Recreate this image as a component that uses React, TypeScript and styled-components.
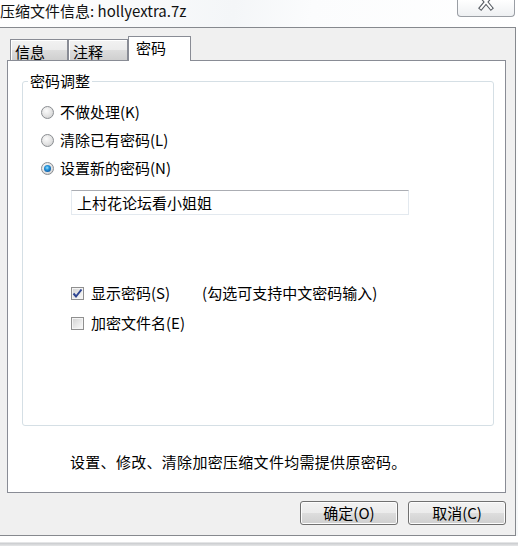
import React from 'react';
import styled, { createGlobalStyle } from 'styled-components';

const GlobalStyle = createGlobalStyle`
    html, body {
        margin: 0;
        padding: 0;
        background: #ffffff;
    }
    body {
        width: 518px;
        height: 546px;
        overflow: hidden;
        font-family: "Noto Sans CJK SC", "Liberation Sans", sans-serif;
        font-size: 15px;
        color: #000;
    }
`;

const Window = styled.div`
    width: 518px;
    height: 546px;
    display: flex;
    flex-direction: column;
    background: linear-gradient(180deg, #ffffff 0%, #f6f8f9 100%);
`;

const TitleBar = styled.div`
    height: 27px;
    display: flex;
    justify-content: space-between;
    align-items: flex-start;
    background: linear-gradient(100deg, #ffffff 0%, #f4f6f8 45%, #fbfcfd 60%, #ffffff 100%);
`;

const Title = styled.div`
    line-height: 21px;
    font-size: 15px;
    color: #111;
    white-space: nowrap;
`;

const CloseButton = styled.div`
    width: 56px;
    height: 16px;
    margin-right: 3px;
    border: 1px solid #9a9ea4;
    border-top: none;
    border-radius: 0 0 4px 4px;
    background: linear-gradient(180deg, #ffffff 0%, #eef0f2 100%);
    display: flex;
    justify-content: center;
    align-items: flex-start;
    overflow: hidden;
`;

const Client = styled.div`
    width: 516px;
    height: 509px;
    box-sizing: border-box;
    border-top: 1px solid #86898e;
    border-right: 1px solid #86898e;
    border-bottom: 1px solid #86898e;
    background: #f0f0f0;
    display: flex;
    flex-direction: column;
`;

const FrameBottom = styled.div`
    flex: 1;
    background: linear-gradient(180deg, #ffffff 0px, #ffffff 6px, #c9cbce 7px, #e6e7e8 10px);
`;

const TabRow = styled.div`
    display: flex;
    align-items: flex-end;
    height: 24px;
    margin-top: 8px;
    padding-left: 10px;
    position: relative;
    z-index: 1;
`;

const Tab = styled.div<{ $w: number; $active?: boolean }>`
    box-sizing: border-box;
    width: ${(p) => p.$w}px;
    height: ${(p) => (p.$active ? 25 : 21)}px;
    margin-bottom: ${(p) => (p.$active ? -1 : 0)}px;
    padding-left: ${(p) => (p.$active ? 7 : 4)}px;
    border: 1px solid #898c95;
    border-bottom: none;
    background: ${(p) =>
        p.$active ? '#ffffff' : 'linear-gradient(180deg, #f2f2f2 0%, #ebebeb 50%, #dddddd 51%, #cfcfcf 100%)'};
    box-shadow: ${(p) => (p.$active ? 'none' : 'inset 1px 1px 0 #ffffff')};
    line-height: ${(p) => (p.$active ? 22 : 24)}px;
    font-size: 15px;
`;

const Panel = styled.div`
    box-sizing: border-box;
    width: 499px;
    height: 433px;
    margin-left: 7px;
    border: 1px solid #898c95;
    background: #ffffff;
    display: flex;
    flex-direction: column;
`;

const GroupBox = styled.fieldset`
    margin: 12px 11px 0 14px;
    padding: 0 0 87px 0;
    border: 1px solid #d5dfe5;
    border-radius: 3px;
    display: flex;
    flex-direction: column;
`;

const GroupLabel = styled.legend`
    margin-left: 5px;
    padding: 0 2px;
    line-height: 16px;
    font-size: 15px;
`;

const RadioList = styled.div`
    margin-top: 9px;
    padding-left: 18px;
    display: flex;
    flex-direction: column;
`;

const OptionRow = styled.label<{ $h: number }>`
    display: flex;
    align-items: center;
    height: ${(p) => p.$h}px;
    gap: 6px;
    line-height: 18px;
    white-space: nowrap;
`;

const RadioDot = styled.span<{ $on?: boolean }>`
    box-sizing: border-box;
    width: 13px;
    height: 13px;
    border-radius: 50%;
    border: 1px solid #8a8d91;
    display: flex;
    align-items: center;
    justify-content: center;
    background: radial-gradient(circle at 40% 35%, #fbfbfb 0%, #e2e2e2 55%, #c6c7c9 100%);

    &::after {
        content: '';
        display: ${(p) => (p.$on ? 'block' : 'none')};
        width: 7px;
        height: 7px;
        border-radius: 50%;
        background: radial-gradient(circle at 45% 40%, #9be2fb 0%, #2a97dc 35%, #0d5ca6 75%, #0a3768 100%);
    }
`;

const PasswordInput = styled.div`
    box-sizing: border-box;
    margin: 8px 0 0 48px;
    width: 338px;
    height: 25px;
    border: 1px solid #e3e9ef;
    border-top-color: #abadb3;
    padding-left: 5px;
    line-height: 23px;
    font-size: 15px;
`;

const CheckList = styled.div`
    margin: 63px 0 0 48px;
    display: flex;
    flex-direction: column;
`;

const CheckBox = styled.span`
    box-sizing: border-box;
    width: 13px;
    height: 13px;
    border: 1px solid #8f8f8f;
    background: linear-gradient(135deg, #d0d0d0 0%, #e6e6e6 50%, #fbfbfb 100%);
    box-shadow: inset 0 0 0 1px #f4f4f4;
    display: flex;
    align-items: center;
    justify-content: center;
    margin-right: 1px;
`;

const Hint = styled.span`
    margin-left: 26px;
`;

const Note = styled.div`
    margin: 26px 0 0 62px;
    line-height: 20px;
    font-size: 15px;
    letter-spacing: 0.3px;
`;

const ButtonRow = styled.div`
    display: flex;
    justify-content: flex-end;
    gap: 10px;
    margin-top: 8px;
    padding-right: 9px;
`;

const Button = styled.div`
    box-sizing: border-box;
    width: 98px;
    height: 24px;
    border: 1px solid #707070;
    border-radius: 3px;
    background: linear-gradient(180deg, #f2f2f2 0%, #ebebeb 50%, #dddddd 51%, #cfcfcf 100%);
    box-shadow: inset 0 0 0 1px #fcfcfc;
    display: flex;
    align-items: center;
    justify-content: center;
    line-height: 20px;
    font-size: 15px;
`;

const CloseGlyph = () => (
    <svg width="18" height="12" viewBox="0 0 18 12">
        <path d="M4 -4 L14 8 M14 -4 L4 8" stroke="#5a5f66" strokeWidth="4.2" strokeLinecap="square" />
        <path d="M4 -4 L14 8 M14 -4 L4 8" stroke="#ffffff" strokeWidth="2" strokeLinecap="square" />
    </svg>
);

const CheckMark = () => (
    <svg width="11" height="11" viewBox="0 0 11 11">
        <path d="M1.5 5.5 L4 8.5 L9.5 1.5" fill="none" stroke="#2e4592" strokeWidth="2" />
    </svg>
);

const App: React.FC = () => {
    const options = [
        { label: '不做处理(K)', on: false },
        { label: '清除已有密码(L)', on: false },
        { label: '设置新的密码(N)', on: true },
    ];

    return (
        <>
            <GlobalStyle />
            <Window>
                <TitleBar>
                    <Title>压缩文件信息: hollyextra.7z</Title>
                    <CloseButton>
                        <CloseGlyph />
                    </CloseButton>
                </TitleBar>
                <Client>
                    <TabRow>
                        <Tab $w={58}>信息</Tab>
                        <Tab $w={60}>注释</Tab>
                        <Tab $w={63} $active>
                            密码
                        </Tab>
                    </TabRow>
                    <Panel>
                        <GroupBox>
                            <GroupLabel>密码调整</GroupLabel>
                            <RadioList>
                                {options.map((o) => (
                                    <OptionRow key={o.label} $h={28}>
                                        <RadioDot $on={o.on} />
                                        {o.label}
                                    </OptionRow>
                                ))}
                            </RadioList>
                            <PasswordInput>上村花论坛看小姐姐</PasswordInput>
                            <CheckList>
                                <OptionRow $h={30}>
                                    <CheckBox>
                                        <CheckMark />
                                    </CheckBox>
                                    显示密码(S)
                                    <Hint>(勾选可支持中文密码输入)</Hint>
                                </OptionRow>
                                <OptionRow $h={30}>
                                    <CheckBox />
                                    加密文件名(E)
                                </OptionRow>
                            </CheckList>
                        </GroupBox>
                        <Note>设置、修改、清除加密压缩文件均需提供原密码。</Note>
                    </Panel>
                    <ButtonRow>
                        <Button>确定(O)</Button>
                        <Button>取消(C)</Button>
                    </ButtonRow>
                </Client>
                <FrameBottom />
            </Window>
        </>
    );
};

export default App;
